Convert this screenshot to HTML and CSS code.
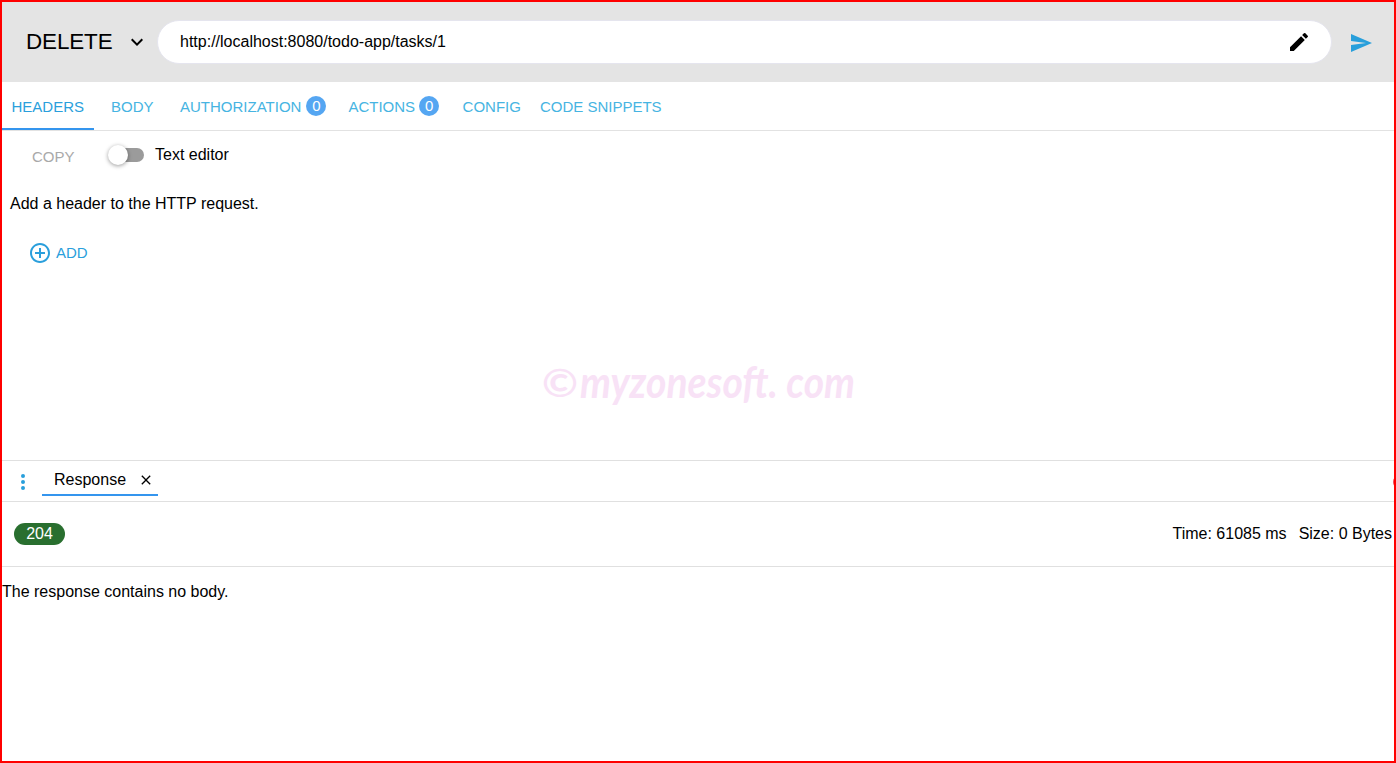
FILE: index.html
```html
<!DOCTYPE html>
<html lang="en">
<head>
<meta charset="utf-8">
<title>HTTP request</title>
<link rel="stylesheet" href="styles.css">
</head>
<body>
<div class="app">
  <header class="url-bar">
    <div class="method">
      <span class="method-name">DELETE</span>
      <svg class="chevron" width="24" height="24" viewBox="0 0 24 24"><path d="M16.59 8.59L12 13.17 7.41 8.59 6 10l6 6 6-6z"/></svg>
    </div>
    <div class="url-field">
      <span>http://localhost:8080/todo-app/tasks/1</span>
      <svg width="24" height="24" viewBox="0 0 24 24"><path d="M3 17.25V21h3.75L17.81 9.94l-3.75-3.75L3 17.25zM20.71 7.04a1 1 0 0 0 0-1.41l-2.34-2.34a1 1 0 0 0-1.41 0l-1.83 1.83 3.75 3.75 1.83-1.83z"/></svg>
    </div>
    <svg class="send" width="24" height="24" viewBox="0 0 24 24"><path d="M2.01 21L23 12 2.01 3 2 10l15 2-15 2z"/></svg>
  </header>

  <nav class="tabs">
    <div class="tab tab-active">HEADERS</div>
    <div class="tab tab-body">BODY</div>
    <div class="tab tab-wide">AUTHORIZATION<span class="badge">0</span></div>
    <div class="tab tab-counted">ACTIONS<span class="badge">0</span></div>
    <div class="tab tab-config">CONFIG</div>
    <div class="tab">CODE SNIPPETS</div>
  </nav>

  <main class="headers-panel">
    <div class="editor-tools">
      <span class="copy">COPY</span>
      <span class="switch"><span class="knob"></span></span>
      <span class="switch-label">Text editor</span>
    </div>
    <p class="hint">Add a header to the HTTP request.</p>
    <div class="add">
      <svg width="24" height="24" viewBox="0 0 24 24"><path d="M13 7h-2v4H7v2h4v4h2v-4h4v-2h-4V7zm-1-5C6.48 2 2 6.48 2 12s4.48 10 10 10 10-4.48 10-10S17.52 2 12 2zm0 18c-4.41 0-8-3.59-8-8s3.59-8 8-8 8 3.59 8 8-3.59 8-8 8z"/></svg>
      <span>ADD</span>
    </div>
  </main>

  <section class="response">
    <div class="response-tabs">
      <svg class="more" width="24" height="24" viewBox="0 0 24 24"><path d="M12 8a2 2 0 1 0 0-4 2 2 0 0 0 0 4zm0 2a2 2 0 1 0 0 4 2 2 0 0 0 0-4zm0 6a2 2 0 1 0 0 4 2 2 0 0 0 0-4z"/></svg>
      <div class="response-tab">
        <span>Response</span>
        <svg width="16" height="16" viewBox="0 0 24 24"><path d="M19 6.41L17.59 5 12 10.59 6.41 5 5 6.41 10.59 12 5 17.59 6.41 19 12 13.41 17.59 19 19 17.59 13.41 12z"/></svg>
      </div>
      <span class="edge-dot"></span>
    </div>
    <div class="status">
      <span class="code">204</span>
      <span class="metrics"><span>Time: 61085 ms</span><span>Size: 0 Bytes</span></span>
    </div>
    <p class="empty">The response contains no body.</p>
  </section>

  <svg class="watermark" width="320" height="70" viewBox="0 0 320 70">
    <text x="2" y="42" class="wm-mark" textLength="36" lengthAdjust="spacingAndGlyphs">©</text>
    <text x="40" y="43" textLength="275" lengthAdjust="spacingAndGlyphs">myzonesoft. com</text>
  </svg>
</div>
</body>
</html>
```
FILE: styles.css
```css
* { box-sizing: border-box; }

body {
  margin: 0;
  background: #fff;
  color: #000;
  font: 16px/20px "Liberation Sans", Arial, sans-serif;
}

p { margin: 0; }
svg { display: block; flex: none; fill: currentColor; }

.app {
  position: relative;
  display: flex;
  flex-direction: column;
  height: 763px;
  border: 2px solid #f00;
  overflow: hidden;
}

.url-bar {
  display: flex;
  align-items: center;
  height: 80px;
  flex: none;
  padding: 0 21px 0 24px;
  background: #e4e4e4;
}

.method {
  display: flex;
  align-items: center;
  justify-content: space-between;
  width: 123px;
  margin-right: 8px;
}

.method-name { font-size: 22.4px; line-height: 26px; padding-bottom: 1px; letter-spacing: -0.1px; }

.url-field {
  display: flex;
  align-items: center;
  justify-content: space-between;
  flex: 1;
  height: 44px;
  padding: 0 20px 0 22px;
  border: 1px solid #e5e5ee;
  border-radius: 22px;
  background: #fff;
}

.url-field span { padding-bottom: 1px; }
.send { margin: 2px 0 0 17px; color: #289fdb; }

.tabs {
  display: flex;
  height: 49px;
  flex: none;
  border-bottom: 1px solid #e2e2e2;
  font-size: 15px;
  color: #46b4e2;
}

.tab { display: flex; align-items: center; padding-top: 2px; white-space: nowrap; }
.tab-active { width: 92px; padding: 3px 0 0 9.5px; border-bottom: 2px solid #3495ee; color: #2a9fdc; }
.tab-body { margin: 0 26.5px 0 17px; }
.tab-wide { margin-right: 22px; }
.tab-wide .badge { margin-left: 5px; }
.tab-counted { margin-right: 23.5px; }
.tab-config { margin-right: 19px; }

.badge {
  width: 20px;
  height: 20px;
  margin: -2px 0 0 4px;
  border-radius: 50%;
  background: #55a6f2;
  color: #fff;
  text-align: center;
}

.headers-panel { height: 329px; flex: none; }

.editor-tools { display: flex; align-items: center; height: 48px; padding-left: 30px; }
.copy { width: 75px; padding-top: 3px; font-size: 15px; color: #a9a9a9; }

.switch {
  position: relative;
  width: 37px;
  height: 14px;
  margin-right: 11px;
  margin-bottom: 1px;
  border-radius: 7px;
  background: linear-gradient(to right, transparent 6px, #9b9b9b 6px);
}

.knob {
  position: absolute;
  left: 1px;
  top: -3px;
  width: 20px;
  height: 20px;
  border-radius: 50%;
  background: #fff;
  box-shadow: 0 1px 4px rgba(0, 0, 0, .4);
}

.switch-label { padding-bottom: 1px; }
.hint { padding: 15px 0 0 8px; }
.add { display: flex; align-items: center; gap: 4px; padding: 27px 0 0 26px; font-size: 15px; color: #2a9fdc; }

.response { border-top: 1px solid #e0e0e0; flex: 1; }
.response-tabs { position: relative; display: flex; height: 41px; padding-left: 9px; border-bottom: 1px solid #e0e0e0; }
.more { margin: 9px 7px 0 0; color: #289fdb; }

.response-tab {
  display: flex;
  align-items: center;
  gap: 12px;
  width: 116px;
  height: 35px;
  padding: 4px 0 0 12px;
  border-bottom: 2px solid #3495ee;
}

.edge-dot {
  position: absolute;
  right: -4px;
  top: 17px;
  width: 5px;
  height: 8px;
  border-radius: 50%;
  background: #f04b5a;
}

.status {
  display: flex;
  align-items: center;
  justify-content: space-between;
  height: 65px;
  padding: 0 2px 0 12px;
  border-bottom: 1px solid #e0e0e0;
}

.code {
  width: 51px;
  height: 22px;
  border-radius: 11px;
  background: #296f2f;
  color: #fff;
  line-height: 21px;
  text-align: center;
}

.metrics { display: flex; gap: 12px; padding-bottom: 1px; }
.empty { padding-top: 15px; }

.watermark {
  position: absolute;
  left: 538px;
  top: 353px;
  overflow: visible;
  fill: #f8e2f6;
  font: italic 700 43px Lato, sans-serif;
}

.wm-mark { font-size: 39px; font-style: normal; }
```
